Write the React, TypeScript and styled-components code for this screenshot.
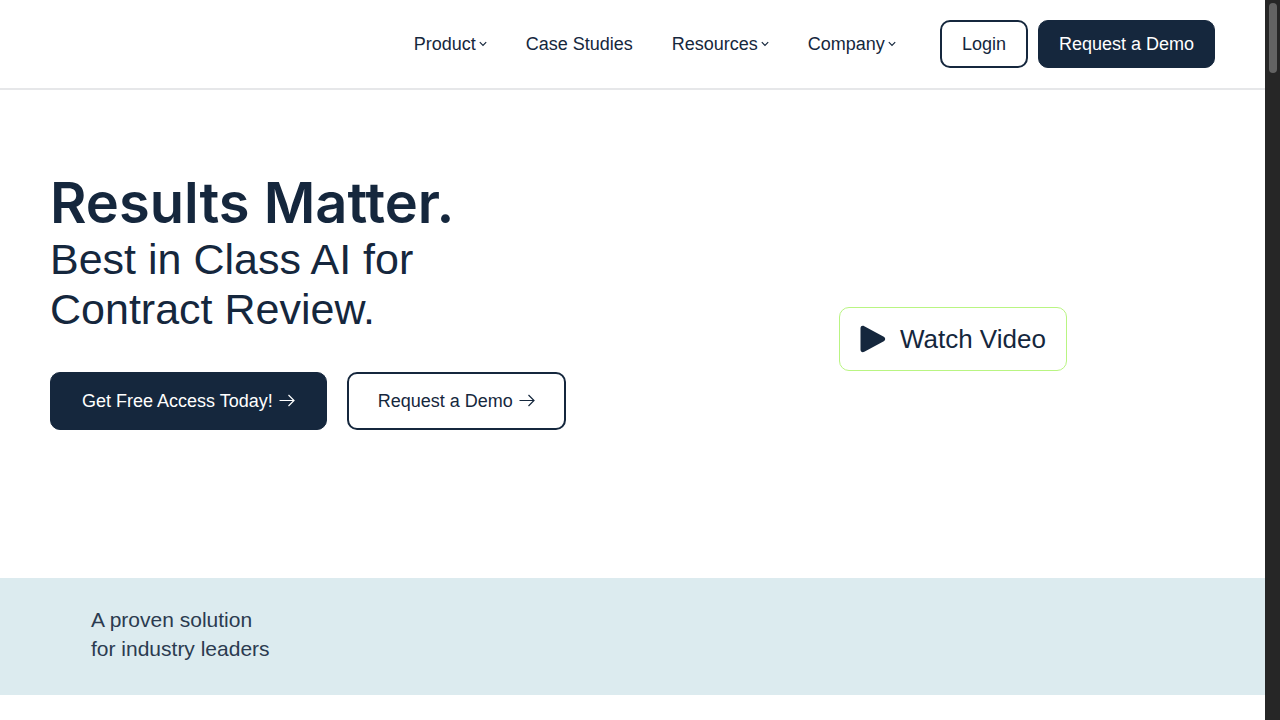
import React from "react";
import styled, { createGlobalStyle } from "styled-components";

const navy = "#15273d";

const GlobalStyle = createGlobalStyle`
  *, *::before, *::after { box-sizing: border-box; }
  body {
    margin: 0;
    background: #fff;
    color: ${navy};
    font-family: "Liberation Sans", Arial, sans-serif;
  }
`;

const Shell = styled.div`
  display: flex;
  min-height: 100vh;
`;

const Page = styled.div`
  flex: 1;
  min-width: 0;
`;

const ScrollTrack = styled.div`
  width: 15px;
  padding: 3px 3px 0 4px;
  background: #262626;
`;

const ScrollThumb = styled.div`
  height: 70px;
  border-radius: 4px;
  background: #636363;
`;

const Header = styled.header`
  display: flex;
  align-items: center;
  justify-content: flex-end;
  gap: 44px;
  padding: 20px 50px;
  border-bottom: 2px solid #e6e7e9;
`;

const Nav = styled.nav`
  display: flex;
  gap: 39px;
`;

const NavLink = styled.a`
  display: flex;
  align-items: center;
  gap: 3px;
  color: ${navy};
  font-size: 18px;
  line-height: 24px;
  text-decoration: none;
  white-space: nowrap;
`;

const HeaderActions = styled.div`
  display: flex;
  gap: 10px;
`;

const Button = styled.button<{ $filled?: boolean; $large?: boolean }>`
  display: flex;
  align-items: center;
  justify-content: center;
  gap: 6px;
  height: ${(p) => (p.$large ? 58 : 48)}px;
  padding: 0 ${(p) => (p.$large ? (p.$filled ? 31 : 29) : 20)}px;
  border: ${(p) => (p.$filled ? 1 : 2)}px solid ${navy};
  border-radius: 10px;
  background: ${(p) => (p.$filled ? navy : "#fff")};
  color: ${(p) => (p.$filled ? "#fff" : navy)};
  font-family: inherit;
  font-size: 18px;
  line-height: 24px;
  white-space: nowrap;
  cursor: pointer;
`;

const Hero = styled.main`
  display: grid;
  grid-template-columns: 55fr 45fr;
  padding: 82px 50px 148px;
`;

const Title = styled.h1`
  margin: 0;
  font-family: Inter, "Liberation Sans", sans-serif;
  font-size: 56px;
  line-height: 62px;
  font-weight: 600;
`;

const Tagline = styled.p`
  margin: 0;
  font-size: 43px;
  line-height: 50px;
`;

const HeroActions = styled.div`
  display: flex;
  gap: 20px;
  margin-top: 38px;
`;

const Media = styled.div`
  display: flex;
  align-items: center;
  justify-content: center;
  padding-top: 76px;
`;

const WatchButton = styled.button`
  display: flex;
  align-items: center;
  gap: 14px;
  height: 64px;
  padding: 0 20px;
  border: 1px solid #b9f582;
  border-radius: 10px;
  background: #fff;
  color: ${navy};
  font-family: inherit;
  font-size: 26px;
  line-height: 36px;
  cursor: pointer;
`;

const Band = styled.section`
  padding: 27px 91px 32px;
  background: #dcebef;
`;

const BandText = styled.p`
  margin: 0;
  color: #2b3b50;
  font-size: 21px;
  line-height: 29px;
`;

const Chevron = () => (
  <svg width="8" height="6" viewBox="0 0 8 6" fill="none" stroke="currentColor" strokeWidth="1.2" aria-hidden="true">
    <path d="M.8 1.2 4 4.4 7.2 1.2" />
  </svg>
);

const Arrow = () => (
  <svg width="16" height="14" viewBox="0 0 16 14" fill="none" stroke="currentColor" strokeWidth="1.2" aria-hidden="true">
    <path d="M.5 6.5H15M9.5 1 15 6.5 9.5 12" />
  </svg>
);

const Play = () => (
  <svg width="26" height="28" viewBox="0 0 26 28" fill="currentColor" aria-hidden="true">
    <path d="M.5 3.2C.5 .9 2.5 .2 4.3 1.2L23.8 11.8C25.7 12.9 25.7 15.1 23.8 16.2L4.3 26.8C2.5 27.8 .5 27 .5 24.8Z" />
  </svg>
);

const navItems = [
  { label: "Product", menu: true },
  { label: "Case Studies", menu: false },
  { label: "Resources", menu: true },
  { label: "Company", menu: true },
];

export default function App() {
  return (
    <>
      <GlobalStyle />
      <Shell>
        <Page>
          <Header>
            <Nav>
              {navItems.map((item) => (
                <NavLink href="#" key={item.label}>
                  {item.label}
                  {item.menu && <Chevron />}
                </NavLink>
              ))}
            </Nav>
            <HeaderActions>
              <Button>Login</Button>
              <Button $filled>Request a Demo</Button>
            </HeaderActions>
          </Header>
          <Hero>
            <div>
              <Title>Results Matter.</Title>
              <Tagline>
                Best in Class AI for
                <br />
                Contract Review.
              </Tagline>
              <HeroActions>
                <Button $filled $large>
                  Get Free Access Today! <Arrow />
                </Button>
                <Button $large>
                  Request a Demo <Arrow />
                </Button>
              </HeroActions>
            </div>
            <Media>
              <WatchButton>
                <Play />
                Watch Video
              </WatchButton>
            </Media>
          </Hero>
          <Band>
            <BandText>
              A proven solution
              <br />
              for industry leaders
            </BandText>
          </Band>
        </Page>
        <ScrollTrack aria-hidden="true">
          <ScrollThumb />
        </ScrollTrack>
      </Shell>
    </>
  );
}
